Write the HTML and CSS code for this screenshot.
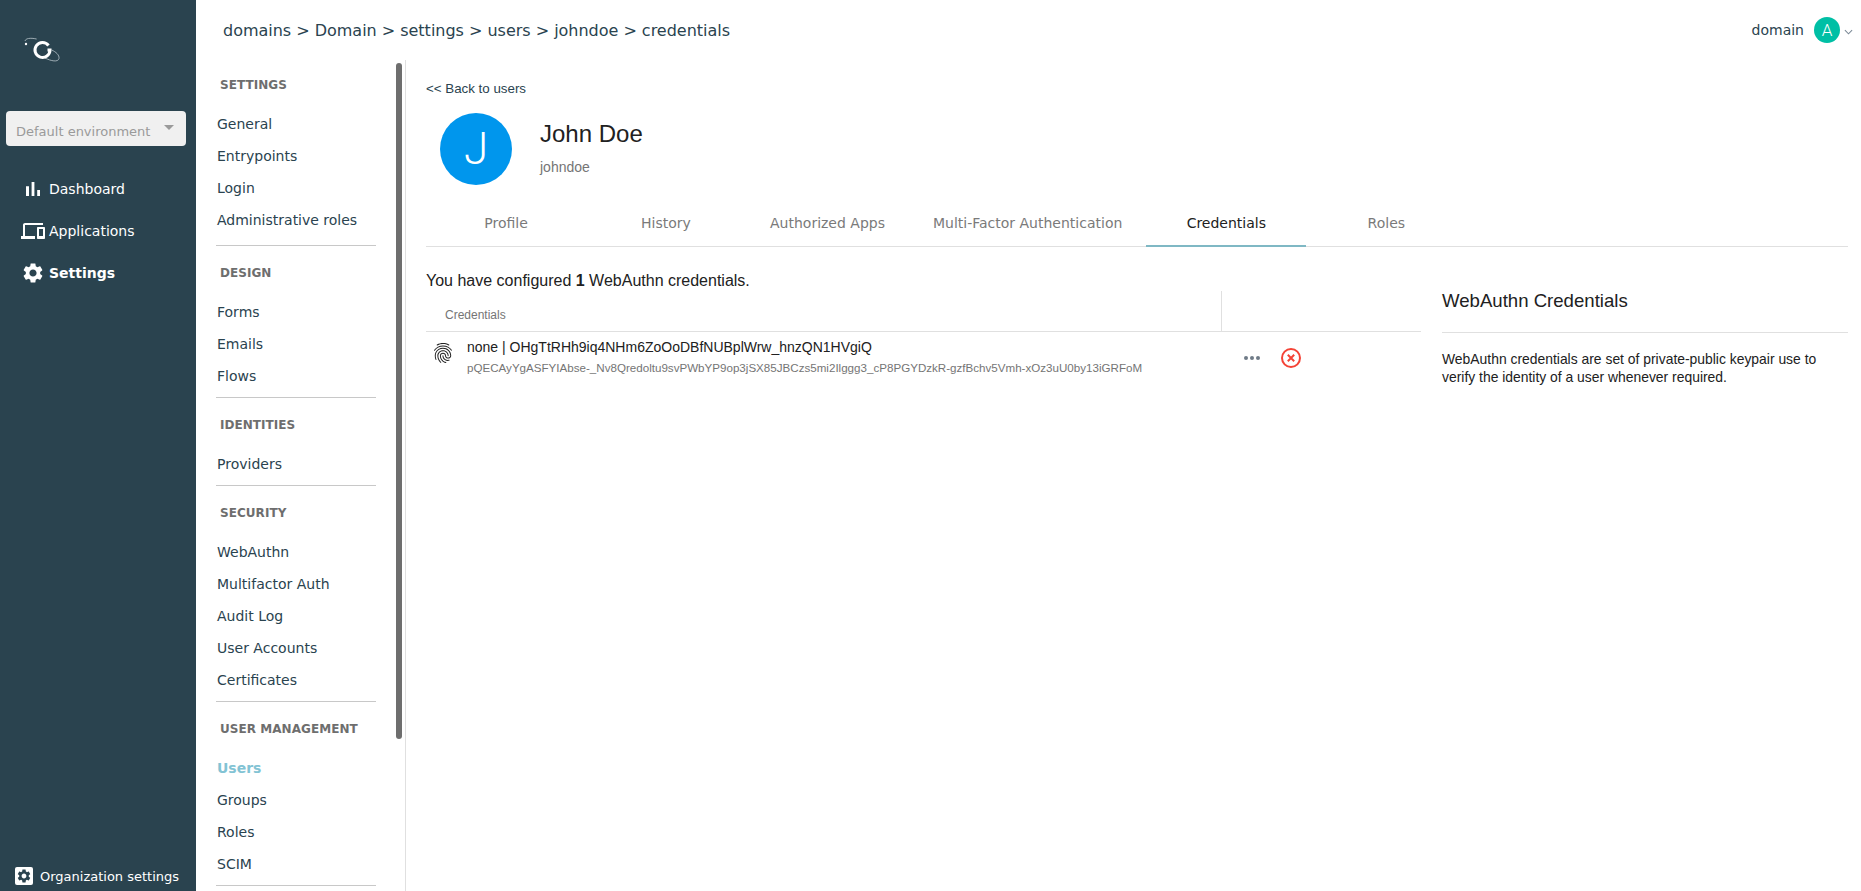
FILE: index.html
```html
<!DOCTYPE html>
<html lang="en">
<head>
	<meta charset="utf-8">
	<title>John Doe - Credentials</title>
	<link rel="stylesheet" href="styles.css">
</head>

<body>
	<div class="app">
		<aside class="sidebar">
			<div class="logo">
				<svg width="36" height="28" viewBox="0 0 36 28" fill="none">
					<path d="M1 6C1.500 3.500 6 2.500 12.600 4M27.700 15C32 17 35.500 20 35 23.500C34 27.500 27 26 21 23" stroke="#a9b7bd" stroke-width="0.9"/>
					<circle cx="2" cy="9" r="1.200" fill="#fff"/>
					<path d="M24.500 10.500A7.500 7.500 0 1 0 26 15H23.500" stroke="#fff" stroke-width="3"/>
				</svg>
			</div>
			<div class="env-select">
				<span>Default environment</span>
				<i class="env-caret"></i>
			</div>
			<nav class="main-nav">
				<a class="main-link">
					<svg class="main-icon" viewBox="0 0 24 24"><path d="M5 9.200h3V19H5zM10.600 5h2.800v14h-2.800zm5.600 8H19v6h-2.800z"/></svg>
					Dashboard
				</a>
				<a class="main-link">
					<svg class="main-icon" viewBox="0 0 24 24"><path d="M4 6h18V4H4c-1.100 0-2 .9-2 2v11H0v3h14v-3H4V6zm19 2h-6c-.55 0-1 .45-1 1v10c0 .55.45 1 1 1h6c.55 0 1-.45 1-1V9c0-.55-.45-1-1-1zm-1 9h-4v-7h4v7z"/></svg>
					Applications
				</a>
				<a class="main-link active">
					<svg class="main-icon" viewBox="0 0 24 24"><path d="M19.140 12.940c.04-.3.06-.61.06-.94 0-.32-.02-.64-.07-.94l2.030-1.580c.18-.14.23-.41.12-.61l-1.920-3.320c-.12-.22-.37-.29-.59-.22l-2.390.96c-.5-.38-1.030-.7-1.620-.94l-.36-2.540c-.04-.24-.24-.41-.48-.41h-3.840c-.24 0-.43.17-.47.41l-.36 2.540c-.59.24-1.130.57-1.620.94l-2.390-.96c-.22-.08-.47 0-.59.22L2.740 8.870c-.12.21-.08.47.12.61l2.030 1.580c-.05.3-.09.63-.09.94s.02.64.07.94l-2.030 1.580c-.18.14-.23.41-.12.61l1.920 3.320c.12.22.37.29.59.22l2.390-.96c.5.38 1.030.7 1.620.94l.36 2.540c.05.24.24.41.48.41h3.840c.24 0 .44-.17.47-.41l.36-2.540c.59-.24 1.130-.56 1.620-.94l2.390.96c.22.08.47 0 .59-.22l1.920-3.320c.12-.22.07-.47-.12-.61l-2.010-1.580zM12 15.600c-1.980 0-3.600-1.620-3.600-3.600s1.620-3.600 3.600-3.600 3.600 1.620 3.600 3.600-1.620 3.600-3.600 3.600z"/></svg>
					Settings
				</a>
			</nav>
			<a class="org-link">
				<span class="org-icon">
					<svg viewBox="0 0 24 24"><path d="M19.140 12.940c.04-.3.06-.61.06-.94 0-.32-.02-.64-.07-.94l2.030-1.580c.18-.14.23-.41.12-.61l-1.920-3.320c-.12-.22-.37-.29-.59-.22l-2.390.96c-.5-.38-1.030-.7-1.620-.94l-.36-2.540c-.04-.24-.24-.41-.48-.41h-3.840c-.24 0-.43.17-.47.41l-.36 2.540c-.59.24-1.130.57-1.620.94l-2.390-.96c-.22-.08-.47 0-.59.22L2.740 8.870c-.12.21-.08.47.12.61l2.030 1.580c-.05.3-.09.63-.09.94s.02.64.07.94l-2.030 1.580c-.18.14-.23.41-.12.61l1.920 3.320c.12.22.37.29.59.22l2.390-.96c.5.38 1.030.7 1.620.94l.36 2.540c.05.24.24.41.48.41h3.840c.24 0 .44-.17.47-.41l.36-2.540c.59-.24 1.130-.56 1.620-.94l2.390.96c.22.08.47 0 .59-.22l1.920-3.320c.12-.22.07-.47-.12-.61l-2.010-1.580zM12 15.600c-1.980 0-3.600-1.620-3.600-3.600s1.620-3.600 3.600-3.600 3.600 1.620 3.600 3.600-1.620 3.600-3.600 3.600z"/></svg>
				</span>
				Organization settings
			</a>
		</aside>

		<div class="main">
			<header class="topbar">
				<div class="breadcrumb">domains &gt; Domain &gt; settings &gt; users &gt; johndoe &gt; credentials</div>
				<div class="account">
					<span>domain</span>
					<span class="account-avatar">A</span>
					<svg class="account-caret" viewBox="0 0 10 6"><path d="M1 1l4 4 4-4" fill="none" stroke="#7b8a97" stroke-width="1.200"/></svg>
				</div>
			</header>

			<div class="body">
				<div class="subnav">
					<div class="subnav-thumb"></div>
					<section class="subnav-group">
						<h4>Settings</h4>
						<a>General</a>
						<a>Entrypoints</a>
						<a>Login</a>
						<a>Administrative roles</a>
					</section>
					<section class="subnav-group">
						<h4>Design</h4>
						<a>Forms</a>
						<a>Emails</a>
						<a>Flows</a>
					</section>
					<section class="subnav-group">
						<h4>Identities</h4>
						<a>Providers</a>
					</section>
					<section class="subnav-group">
						<h4>Security</h4>
						<a>WebAuthn</a>
						<a>Multifactor Auth</a>
						<a>Audit Log</a>
						<a>User Accounts</a>
						<a>Certificates</a>
					</section>
					<section class="subnav-group">
						<h4>User Management</h4>
						<a class="current">Users</a>
						<a>Groups</a>
						<a>Roles</a>
						<a>SCIM</a>
					</section>
				</div>

				<main class="content">
					<a class="back-link">&lt;&lt; Back to users</a>
					<div class="profile">
						<div class="profile-avatar">J</div>
						<div class="profile-name">
							<h2>John Doe</h2>
							<div class="username">johndoe</div>
						</div>
					</div>

					<div class="tabs">
						<a class="tab">Profile</a>
						<a class="tab">History</a>
						<a class="tab">Authorized Apps</a>
						<a class="tab">Multi-Factor Authentication</a>
						<a class="tab active">Credentials</a>
						<a class="tab">Roles</a>
					</div>

					<div class="columns">
						<div class="creds">
							<p class="creds-count">You have configured <b>1</b> WebAuthn credentials.</p>
							<div class="table-head">
								<div class="head-cell">Credentials</div>
								<div class="head-actions"></div>
							</div>
							<div class="table-row">
								<svg class="finger" viewBox="0 0 24 24"><path d="M17.810 4.470c-.08 0-.16-.02-.23-.06C15.660 3.420 14 3 12.010 3c-1.980 0-3.860.47-5.570 1.410-.24.13-.54.04-.68-.2-.13-.24-.04-.55.2-.68C7.820 2.520 9.860 2 12.010 2c2.130 0 3.990.47 6.030 1.520.25.13.34.43.21.67-.09.18-.26.28-.44.28zM3.500 9.720c-.1 0-.2-.03-.29-.09-.23-.16-.28-.47-.12-.7.99-1.400 2.250-2.500 3.750-3.270C9.980 4.040 14 4.030 17.150 5.650c1.500.77 2.760 1.860 3.750 3.250.16.22.11.54-.12.7-.23.16-.54.11-.7-.12-.9-1.260-2.040-2.250-3.390-2.940-2.870-1.470-6.540-1.470-9.400.01-1.360.7-2.500 1.700-3.400 2.960-.08.14-.23.21-.39.21zm6.250 12.070c-.13 0-.26-.05-.35-.15-.87-.87-1.340-1.430-2.010-2.640-.69-1.230-1.050-2.730-1.050-4.340 0-2.970 2.540-5.390 5.660-5.390s5.660 2.420 5.660 5.390c0 .28-.22.5-.5.5s-.5-.22-.5-.5c0-2.420-2.090-4.390-4.660-4.390s-4.660 1.970-4.660 4.390c0 1.440.32 2.770.93 3.850.64 1.150 1.080 1.640 1.850 2.420.19.2.19.51 0 .71-.11.1-.24.15-.37.15zm7.170-1.850c-1.190 0-2.240-.3-3.100-.89-1.490-1.010-2.380-2.650-2.380-4.390 0-.28.22-.5.5-.5s.5.22.5.5c0 1.410.72 2.740 1.940 3.560.71.48 1.540.71 2.540.71.24 0 .64-.03 1.040-.1.27-.05.53.13.58.41.05.27-.13.53-.41.58-.57.11-1.070.12-1.210.12zM14.910 22c-.04 0-.09-.01-.13-.02-1.590-.44-2.630-1.030-3.720-2.100-1.400-1.390-2.170-3.240-2.170-5.220 0-1.620 1.380-2.940 3.080-2.940s3.080 1.320 3.080 2.940c0 1.070.93 1.940 2.080 1.940s2.080-.87 2.080-1.940c0-3.770-3.250-6.830-7.250-6.830-2.840 0-5.440 1.580-6.610 4.030-.39.81-.59 1.760-.59 2.800 0 .78.07 2.010.67 3.610.1.26-.03.55-.29.64-.26.1-.55-.04-.64-.29-.49-1.310-.73-2.610-.73-3.960 0-1.200.23-2.290.68-3.240 1.330-2.790 4.280-4.600 7.510-4.600 4.550 0 8.250 3.510 8.250 7.830 0 1.620-1.380 2.940-3.080 2.940s-3.080-1.320-3.080-2.940c0-1.070-.93-1.940-2.080-1.940s-2.080.87-2.080 1.940c0 1.710.66 3.310 1.870 4.510.95.94 1.860 1.460 3.270 1.850.27.07.42.35.35.61-.05.23-.26.38-.47.38z"/></svg>
								<div class="cred-text">
									<div class="cred-id">none | OHgTtRHh9iq4NHm6ZoOoDBfNUBplWrw_hnzQN1HVgiQ</div>
									<div class="cred-key">pQECAyYgASFYIAbse-_Nv8Qredoltu9svPWbYP9op3jSX85JBCzs5mi2Ilggg3_cP8PGYDzkR-gzfBchv5Vmh-xOz3uU0by13iGRFoM</div>
								</div>
								<div class="row-actions">
									<span class="dots"><i></i><i></i><i></i></span>
									<svg class="remove" viewBox="0 0 20 20"><circle cx="10" cy="10" r="9" fill="none" stroke="#f44336" stroke-width="2"/><path d="M6.800 6.800l6.400 6.400M13.200 6.800l-6.400 6.400" stroke="#f44336" stroke-width="2"/></svg>
								</div>
							</div>
						</div>

						<aside class="help">
							<h3>WebAuthn Credentials</h3>
							<p>WebAuthn credentials are set of private-public keypair use to verify the identity of a user whenever required.</p>
						</aside>
					</div>
				</main>
			</div>
		</div>
	</div>
</body>

</html>
```

FILE: styles.css
```css
html {
	box-sizing: border-box;
}
*,
*::before,
*::after {
	box-sizing: inherit;
}

body {
	background-color: #fff;
	color: #2a434f;
	font-family: "DejaVu Sans", sans-serif;
	font-size: 14px;
	height: 891px;
	margin: 0;
	overflow: hidden;
}

h2,
h3,
h4,
p {
	margin: 0;
}

.app {
	display: flex;
	height: 100%;
}

/* left bar */
.sidebar {
	background-color: #2a434f;
	color: #fff;
	display: flex;
	flex: 0 0 196px;
	flex-direction: column;
	height: 100%;
}

.logo {
	height: 111px;
	padding: 35px 0 0 24px;
}

.logo svg {
	display: block;
}

.env-select {
	align-items: center;
	background-color: #f0f0f0;
	border-radius: 4px;
	color: #9a9a9a;
	display: flex;
	font-size: 13px;
	height: 35px;
	justify-content: space-between;
	margin: 0 10px 0 6px;
	padding: 6px 12px 0 10px;
}

.env-caret {
	border-left: 5px solid transparent;
	border-right: 5px solid transparent;
	border-top: 5px solid #9a9a9a;
	margin-top: -8px;
}

.main-nav {
	display: flex;
	flex-direction: column;
	margin-top: 22px;
}

.main-link {
	align-items: center;
	display: flex;
	font-size: 14px;
	gap: 4px;
	height: 42px;
	padding-left: 21px;
}

.main-link.active {
	font-weight: bold;
}

.main-icon {
	fill: #fff;
	height: 24px;
	width: 24px;
}

.org-link {
	align-items: center;
	display: flex;
	font-size: 13px;
	gap: 7px;
	margin-top: auto;
	padding: 0 0 6px 15px;
}

.org-icon {
	background-color: #fff;
	border-radius: 2px;
	display: block;
	height: 18px;
	padding: 1px;
	width: 18px;
}

.org-icon svg {
	display: block;
	fill: #2a434f;
}

/* top */
.main {
	display: flex;
	flex: 1;
	flex-direction: column;
	min-width: 0;
}

.topbar {
	align-items: center;
	display: flex;
	flex: 0 0 60px;
	justify-content: space-between;
	padding: 0 8px 0 27px;
}

.breadcrumb {
	font-size: 16px;
	letter-spacing: -0.015px;
}

.account {
	align-items: center;
	display: flex;
	font-size: 14px;
}

.account-avatar {
	align-items: center;
	background-color: #00bfa5;
	border-radius: 50%;
	color: #fff;
	display: flex;
	font-family: Roboto, sans-serif;
	font-size: 17px;
	font-weight: 300;
	height: 26px;
	justify-content: center;
	margin-left: 10px;
	width: 26px;
}

.account-caret {
	height: 6px;
	margin: 3px 0 0 4px;
	width: 9px;
}

.body {
	display: flex;
	flex: 1;
	min-height: 0;
}

/* second menu */
.subnav {
	border-right: 1px solid #e0e0e0;
	flex: 0 0 210px;
	overflow: hidden;
	padding: 0 29px 0 20px;
	position: relative;
}

.subnav-thumb {
	background-color: #6e6e6e;
	border-radius: 3px;
	height: 676px;
	position: absolute;
	right: 3px;
	top: 3px;
	width: 6px;
}

.subnav-group {
	border-bottom: 1px solid #c8c8c8;
	padding: 17px 0 5px;
}

.subnav-group:first-of-type {
	padding: 15px 0 9px;
}

.subnav-group h4 {
	color: #6e6e6e;
	font-size: 12px;
	font-weight: bold;
	height: 20px;
	letter-spacing: 0.05px;
	line-height: 20px;
	margin: 0 0 13px 4px;
	text-transform: uppercase;
}

.subnav-group a {
	display: block;
	height: 32px;
	line-height: 32px;
	padding-left: 1px;
}

.subnav-group a.current {
	color: #82c3d4;
	font-weight: bold;
}

/* page content */
.content {
	flex: 1;
	font-family: "Liberation Sans", sans-serif;
	min-width: 0;
	padding: 21px 13px 0 20px;
}

.back-link {
	color: #2a434f;
	display: block;
	font-size: 13.33px;
	line-height: 16px;
}

.profile {
	align-items: center;
	display: flex;
	gap: 28px;
	margin-top: 16px;
	padding-left: 14px;
}

.profile-avatar {
	align-items: center;
	background-color: #0096ed;
	border-radius: 50%;
	color: #fff;
	display: flex;
	font-family: Roboto, sans-serif;
	font-size: 44px;
	font-weight: 300;
	height: 72px;
	justify-content: center;
	width: 72px;
}

.profile-name {
	padding-bottom: 3px;
}

.profile h2 {
	color: #212121;
	font-size: 24px;
	font-weight: normal;
	line-height: 28px;
}

.username {
	color: #757575;
	font-size: 14px;
	line-height: 16px;
	margin-top: 11px;
}

.tabs {
	border-bottom: 1px solid #e0e0e0;
	display: flex;
	font-family: "DejaVu Sans", sans-serif;
	height: 48px;
	margin-top: 14px;
}

.tab {
	align-items: center;
	color: #7a7a7a;
	display: flex;
	font-size: 14px;
	height: 48px;
	justify-content: center;
	min-width: 160px;
	padding: 0 24px;
}

.tab.active {
	box-shadow: inset 0 -2px 0 #7fb8c4;
	color: #212121;
}

.columns {
	display: flex;
	gap: 21px;
}

.creds {
	flex: 0 0 995px;
}

.creds-count {
	color: #212121;
	font-size: 16px;
	line-height: 18px;
	margin-top: 25px;
}

.table-head {
	border-bottom: 1px solid #e0e0e0;
	color: #757575;
	display: flex;
	font-size: 12px;
	height: 41px;
	margin-top: 1px;
}

.head-cell {
	align-items: center;
	border-right: 1px solid #e0e0e0;
	display: flex;
	flex: 0 0 796px;
	padding: 8px 0 0 19px;
}

.table-row {
	align-items: flex-start;
	display: flex;
	padding-top: 6px;
}

.finger {
	fill: #212121;
	flex: none;
	height: 24px;
	margin: 3px 12px 0 5px;
	width: 24px;
}

.cred-text {
	flex: 0 0 777px;
}

.cred-id {
	color: #212121;
	font-size: 14px;
	line-height: 18px;
}

.cred-key {
	color: #757575;
	font-size: 11.6px;
	line-height: 16px;
	margin-top: 4px;
}

.row-actions {
	align-items: center;
	display: flex;
	gap: 21px;
	margin-top: 10px;
}

.dots {
	display: flex;
	gap: 2px;
}

.dots i {
	background-color: #6f7b87;
	border-radius: 50%;
	height: 4px;
	width: 4px;
}

.remove {
	height: 20px;
	width: 20px;
}

.help {
	color: #212121;
	flex: 1;
	min-width: 0;
}

.help h3 {
	border-bottom: 1px solid #e0e0e0;
	font-size: 18.6px;
	font-weight: normal;
	height: 42px;
	line-height: 20px;
	margin-bottom: 17px;
	margin-top: 44px;
}

.help p {
	font-size: 13.9px;
	line-height: 18px;
}
```
